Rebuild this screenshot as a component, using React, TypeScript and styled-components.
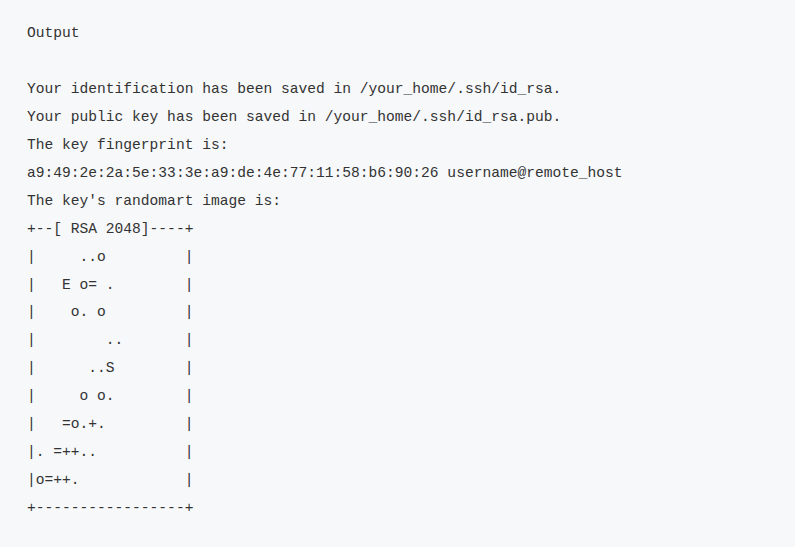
import React from "react";
import styled, { createGlobalStyle } from "styled-components";

const Global = createGlobalStyle`
  html, body {
    margin: 0;
    padding: 0;
    background: #f7f8fa;
  }
`;

const Panel = styled.div`
  box-sizing: border-box;
  width: 795px;
  min-height: 547px;
  background: #f7f8fa;
  padding: 20px 27px;
  font-family: "Liberation Mono", "DejaVu Sans Mono", monospace;
  font-size: 14.6px;
  line-height: 27.93px;
  color: #333;
`;

const Label = styled.div`
  margin: 0;
`;

const Code = styled.pre`
  margin: 28px 0 0;
  font: inherit;
  white-space: pre;
`;

const lines = [
  "Your identification has been saved in /your_home/.ssh/id_rsa.",
  "Your public key has been saved in /your_home/.ssh/id_rsa.pub.",
  "The key fingerprint is:",
  "a9:49:2e:2a:5e:33:3e:a9:de:4e:77:11:58:b6:90:26 username@remote_host",
  "The key's randomart image is:",
  "+--[ RSA 2048]----+",
  "|     ..o         |",
  "|   E o= .        |",
  "|    o. o         |",
  "|        ..       |",
  "|      ..S        |",
  "|     o o.        |",
  "|   =o.+.         |",
  "|. =++..          |",
  "|o=++.            |",
  "+-----------------+",
];

export default function App() {
  return (
    <>
      <Global />
      <Panel>
        <Label>Output</Label>
        <Code>{lines.join("\n")}</Code>
      </Panel>
    </>
  );
}
